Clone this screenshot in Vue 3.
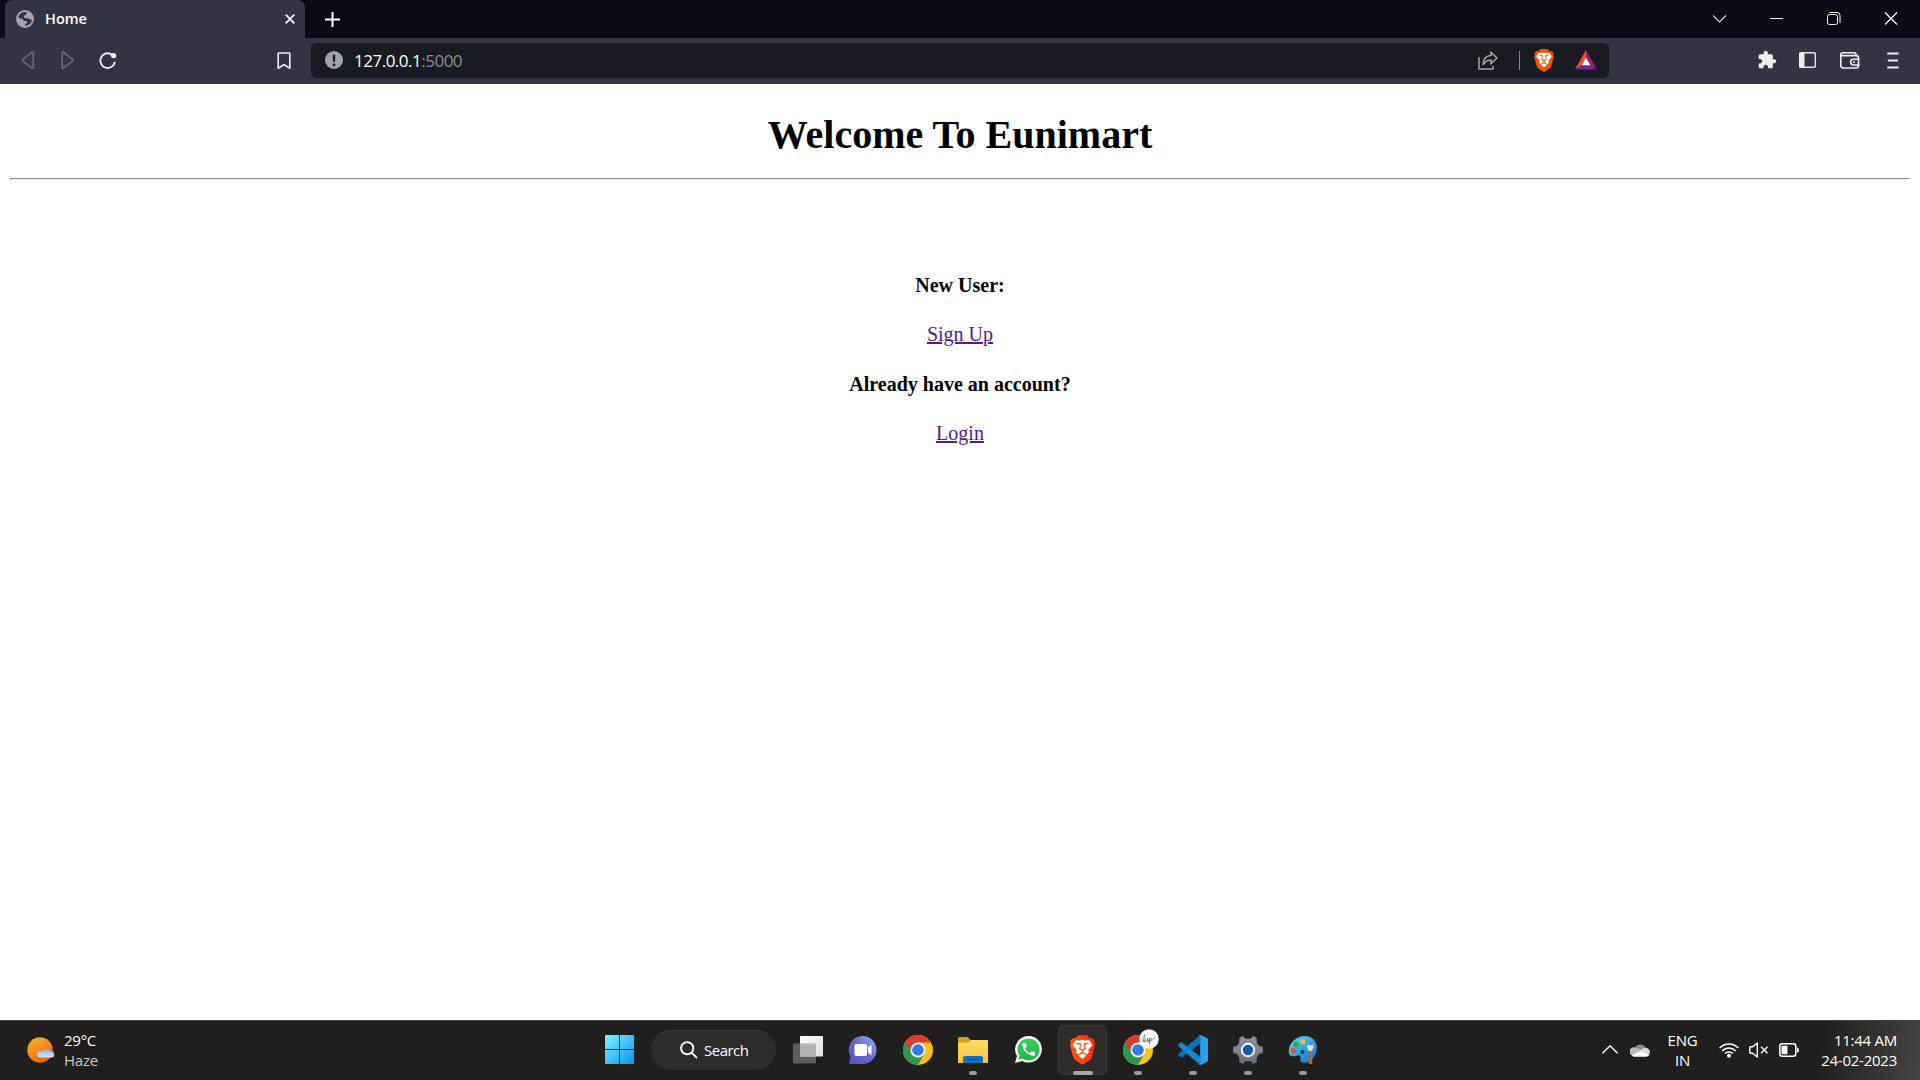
<script setup>
const shield =
  'M15.68 0l2.096 2.38s1.84-.512 2.709.358c.868.87 1.584 1.638 1.584 1.638l-.562 1.381.715 2.047s-2.104 7.98-2.35 8.955c-.486 1.919-.818 2.66-2.198 3.633-1.38.972-3.884 2.66-4.293 2.916-.409.256-.92.692-1.38.692-.46 0-.97-.436-1.38-.692a185.796 185.796 0 01-4.293-2.916c-1.38-.973-1.712-1.714-2.197-3.633-.247-.975-2.351-8.955-2.351-8.955l.715-2.047-.562-1.381s.716-.768 1.585-1.638c.868-.87 2.708-.358 2.708-.358L8.321 0h7.36z'
const lion =
  'M12.001 14.936c-.14 0-1.038.317-1.758.69-.72.373-1.242.637-1.409.742-.167.104-.065.301.087.409.152.107 2.194 1.69 2.393 1.866.198.175.489.464.687.464.198 0 .49-.29.688-.464.198-.175 2.24-1.759 2.392-1.866.152-.108.254-.305.087-.41-.167-.104-.689-.368-1.41-.741-.72-.373-1.617-.69-1.757-.69zm0-11.278s-.409.001-1.022.206-1.278.46-1.584.46c-.307 0-2.581-.434-2.581-.434S4.119 7.152 4.119 7.849c0 .697.339.881.68 1.243l2.02 2.149c.192.203.59.511.356 1.066-.235.555-.58 1.26-.196 1.977.384.716 1.042 1.194 1.464 1.115.421-.08 1.412-.598 1.776-.834.364-.237 1.518-1.19 1.518-1.554 0-.365-1.193-1.02-1.413-1.168-.22-.15-1.226-.725-1.247-.95-.02-.227-.012-.293.284-.851.297-.559.831-1.304.742-1.8-.089-.495-.95-.753-1.565-.986-.615-.232-1.799-.671-1.947-.74-.148-.068-.11-.133.339-.175.448-.043 1.719-.212 2.292-.052.573.16 1.552.403 1.632.532.079.13.149.134.067.579-.081.445-.5 2.581-.541 2.96-.04.38-.12.63.288.724.409.094 1.097.256 1.333.256s.924-.162 1.333-.256c.408-.093.329-.344.288-.723-.04-.38-.46-2.516-.541-2.961-.082-.445-.012-.45.067-.579.08-.129 1.059-.372 1.632-.532.573-.16 1.845.009 2.292.052.449.042.487.107.339.175-.148.069-1.332.508-1.947.74-.615.233-1.476.49-1.565.986-.09.496.445 1.241.742 1.8.297.558.304.624.284.85-.02.226-1.026.802-1.247.951-.22.15-1.413.803-1.413 1.168 0 .364 1.154 1.317 1.518 1.554.364.236 1.355.755 1.776.834.422.079 1.08-.4 1.464-1.115.384-.716.039-1.422-.195-1.977-.235-.555.163-.863.355-1.066l2.02-2.149c.341-.362.68-.546.68-1.243 0-.697-2.695-3.96-2.695-3.96s-2.274.436-2.58.436c-.307 0-.972-.256-1.585-.461-.613-.205-1.022-.206-1.022-.206z'

const apps = [
  { name: 'taskview' },
  { name: 'chat' },
  { name: 'chrome' },
  { name: 'files', running: true },
  { name: 'whatsapp' },
  { name: 'brave', running: true, active: true },
  { name: 'chrome', running: true, profile: true },
  { name: 'code', running: true },
  { name: 'settings', running: true },
  { name: 'paint', running: true },
]
</script>

<template>
  <div class="screen">
    <header class="tabs">
      <div class="tab">
        <svg class="globe" width="18" height="18" viewBox="0 0 18 18">
          <circle cx="9" cy="9" r="9" fill="#a3a6b0" />
          <path d="M9 2C6 2 3 4 2.200 7.600L5 8.700c2 .2 2.800 1 2.600 2.300h2.700c.8 0 1 .6.800 1.400-.2 1-.9 1.300-1.900 1.300v2.200c3.800-.2 6.500-2.700 6.800-6.300-1.800.2-2.700-.3-3.200-1.300H9.600C8.300 8.200 7.700 7.200 8 6.300c.2-.8.900-1.100 2-1.200.1-1.200.4-2 1.300-2.800C10.600 2 9.800 2 9 2z" fill="#323443" />
        </svg>
        <span class="tab-title">Home</span>
        <svg class="tab-close" width="10" height="10" viewBox="0 0 10 10"><path d="M.7.7l8.600 8.600M9.300.7L.7 9.300" stroke="#fff" stroke-width="1.700" /></svg>
      </div>
      <svg class="plus" width="15" height="15" viewBox="0 0 15 15"><path d="M7.500 0v15M0 7.500h15" stroke="#fff" stroke-width="2" /></svg>
      <div class="window-buttons">
        <svg width="57" height="38"><path d="M22 15.500l6.500 6.500 6.500-6.500" fill="none" stroke="#d8d8dc" stroke-width="1.100" /></svg>
        <svg width="57" height="38"><path d="M22 18.500h13" stroke="#fff" /></svg>
        <svg width="57" height="38" fill="none" stroke="#fff"><rect x="22.500" y="14.500" width="10" height="10" rx="2" /><path d="M24.500 12.500h7.500a3 3 0 0 1 3 3v7.500" /></svg>
        <svg width="58" height="38"><path d="M23 12.500l12 12M35 12.500l-12 12" stroke="#fff" stroke-width="1.200" /></svg>
      </div>
    </header>

    <div class="toolbar">
      <div class="nav">
        <svg width="40" height="46"><path d="M27.300 15v14.500q0 1-1 .5L17 23.300q-1.200-1 0-2L26.300 14q1-.3 1 1z" transform="translate(-6 0)" fill="none" stroke="#6b6d78" stroke-width="1.500" /></svg>
        <svg width="40" height="46"><path d="M16.700 15v14.500q0 1 1 .5L27 23.300q1.200-1 0-2L17.700 14q-1-.3-1 1z" transform="translate(-6.500 0)" fill="none" stroke="#6b6d78" stroke-width="1.500" /></svg>
        <svg width="40" height="46"><path d="M18.500 15.900A7.300 7.300 0 1 0 22.700 24.500" fill="none" stroke="#eee" stroke-width="1.900" stroke-linecap="round" /><path d="M18 15.500Q19.500 14.800 21.500 15q2.800.3 2.800 2.800t-2.600 2.500q-1.700 0-2.500-1.500z" fill="#eee" /></svg>
        <svg class="bookmark" width="14" height="18" viewBox="0 0 14 18"><path d="M1.800 1h10.400q.6 0 .6.600v14.700L7.700 13q-.7-.4-1.400 0l-5.100 3.300V1.600q0-.6.600-.6z" fill="none" stroke="#eee" stroke-width="1.600" stroke-linejoin="round" /></svg>
      </div>
      <div class="address">
        <svg width="18" height="18" viewBox="0 0 18 18"><circle cx="9" cy="9" r="9" fill="#a0a3ad" /><path d="M9 3.500v7.300" stroke="#191b22" stroke-width="2.400" /><circle cx="9" cy="14" r="1.400" fill="#191b22" /></svg>
        <span class="url">127.0.0.1<span class="port">:5000</span></span>
        <div class="address-icons">
          <svg class="share" width="20" height="19" viewBox="0 0 20 19" fill="none" stroke="#a5a6aa" stroke-width="1.500"><path d="M1 6v12h14v-3" /><path d="M5 14q.5-9.500 8-9.500V1.300L19 7l-6 5.500V9.200Q8 8.700 5 14z" /></svg>
          <span class="divider"></span>
          <svg class="shield" width="20" height="23" viewBox="1.600 0 20.800 24" preserveAspectRatio="none"><path :d="shield" fill="#fb5008" /><path :d="lion" fill="#fff" /></svg>
          <svg class="bat" width="22" height="20" viewBox="0 0 22 20"><path d="M11 0L0 19.500 7.500 15 11 8z" fill="#fc4a27" /><path d="M11 0l11 19.500L14.800 15 11 8z" fill="#9e1f63" /><path d="M0 19.500h22L15.500 15h-9z" fill="#662d91" /><path d="M11 7.500L6.700 15.200h8.600z" fill="#fff" /></svg>
        </div>
      </div>
      <div class="tools">
        <svg width="20" height="20" viewBox="0 0 24 24"><path fill="#eee" d="M20.500 11H19V7c0-1.100-.9-2-2-2h-4V3.500C13 2.120 11.880 1 10.500 1S8 2.120 8 3.500V5H4c-1.100 0-1.990.9-1.990 2v3.800H3.500c1.490 0 2.700 1.210 2.700 2.700s-1.210 2.700-2.700 2.700H2V20c0 1.100.9 2 2 2h3.800v-1.500c0-1.490 1.210-2.700 2.700-2.700 1.490 0 2.700 1.210 2.700 2.700V22H17c1.100 0 2-.9 2-2v-4h1.500c1.380 0 2.500-1.120 2.500-2.500S21.880 11 20.500 11z" /></svg>
        <svg class="panel" width="17" height="16" viewBox="0 0 17 16"><rect x=".7" y=".7" width="15.600" height="14.600" rx="1" fill="none" stroke="#e4e4e8" stroke-width="1.400" /><path d="M0 1h5.500v14H0z" fill="#eee" /></svg>
        <svg class="wallet" width="20" height="17" viewBox="0 0 20 17" fill="none" stroke="#eee" stroke-width="1.600"><path d="M16 3.500V2.200Q16 .8 14.500.8h-12Q.8.800.8 2.500v11q0 2.500 2.500 2.500H16q2.500 0 2.500-2.500V6Q18.500 3.600 16 3.600H3Q1 3.600.8 2.300" /><path d="M19.500 7.200h-6a2.900 2.900 0 0 0 0 5.800h6M13 10h2" /></svg>
        <svg class="menu" width="12" height="17" viewBox="0 0 12 17"><path d="M.3 1.500h11.200M.8 8.500h10.200M.3 15.500h11.200" stroke="#eee" stroke-width="1.800" /></svg>
      </div>
    </div>

    <main class="page">
      <h1>Welcome To Eunimart</h1>
      <hr />
      <div class="choices">
        <b class="new-user">New User:</b>
        <a class="signup">Sign Up</a>
        <b class="have-account">Already have an account?</b>
        <a class="login">Login</a>
      </div>
    </main>

    <footer class="taskbar">
      <svg width="0" height="0" class="defs">
        <defs>
          <linearGradient id="sun" x1="0" y1="0" x2=".6" y2="1"><stop offset="0" stop-color="#f5b92e" /><stop offset="1" stop-color="#f2650f" /></linearGradient>
          <linearGradient id="cloud" x1="0" y1="0" x2="0" y2="1"><stop offset="0" stop-color="#86aef0" /><stop offset="1" stop-color="#d5e4fb" /></linearGradient>
          <linearGradient id="win" gradientUnits="userSpaceOnUse" x1="0" y1="0" x2="29" y2="29"><stop offset="0" stop-color="#7cf3ff" /><stop offset="1" stop-color="#0a92fb" /></linearGradient>
          <linearGradient id="chat" x1="0" y1="1" x2="1" y2="0"><stop offset="0" stop-color="#5450c4" /><stop offset=".5" stop-color="#6b68cd" /><stop offset="1" stop-color="#86b6f6" /></linearGradient>
          <linearGradient id="folder" x1="0" y1="0" x2="0" y2="1"><stop offset="0" stop-color="#ffdc6b" /><stop offset="1" stop-color="#fcc32e" /></linearGradient>
          <linearGradient id="brave" x1="0" y1="0" x2="1" y2="0"><stop offset="0" stop-color="#ff5a10" /><stop offset="1" stop-color="#ff2b00" /></linearGradient>
          <linearGradient id="palette" x1="0" y1="0" x2=".8" y2="1"><stop offset="0" stop-color="#59dcf5" /><stop offset="1" stop-color="#1573d2" /></linearGradient>
          <linearGradient id="gear" gradientUnits="userSpaceOnUse" x1="0" y1="0" x2="0" y2="30"><stop offset="0" stop-color="#8d969e" /><stop offset="1" stop-color="#66707a" /></linearGradient>
          <linearGradient id="sheet" x1="0" y1="0" x2="1" y2="1"><stop offset="0" stop-color="#fff" /><stop offset="1" stop-color="#ddd" /></linearGradient>
          <linearGradient id="green" x1="0" y1="0" x2="0" y2="1"><stop offset="0" stop-color="#35d160" /><stop offset="1" stop-color="#20b845" /></linearGradient>
        </defs>
      </svg>

      <div class="weather">
        <svg width="28" height="26" viewBox="0 0 28 26"><circle cx="13" cy="13" r="12.700" fill="url(#sun)" /><path d="M13.500 20.500a3.100 3.100 0 0 1-.3-6.200q.8-.2 1.800 0a4.500 4.500 0 0 1 8.300.2 3 3 0 1 1 1.700 6z" fill="url(#cloud)" /></svg>
        <div class="weather-text"><span class="temp">29°C</span><span class="haze">Haze</span></div>
      </div>

      <div class="dock">
        <div class="start"><svg width="29" height="29" viewBox="0 0 29 29" fill="url(#win)"><path d="M1 0h13v14H0V1q0-1 1-1zM15 0h13q1 0 1 1v13H15zM0 15h14v14H1q-1 0-1-1zM15 15h14v13q0 1-1 1H15z" /></svg></div>
        <div class="search">
          <svg width="18" height="18" viewBox="0 0 18 18" fill="none" stroke="#fff" stroke-width="1.900"><circle cx="7.200" cy="7.200" r="6.100" /><path d="M11.600 11.600l5.400 5.400" /></svg>
          <span>Search</span>
        </div>
        <div v-for="(app, i) in apps" :key="i" class="app" :class="{ active: app.active }">
          <svg v-if="app.name === 'taskview'" width="30" height="30" viewBox="0 0 30 30"><rect y="8.500" width="23" height="20" rx="1" fill="#5d5d5d" /><rect x="7" y="1" width="23" height="20.500" rx="1" fill="url(#sheet)" /><path d="M7 8.500h16v13H8q-1 0-1-1z" fill="#b3b3b3" /></svg>
          <svg v-else-if="app.name === 'chat'" width="30" height="30" viewBox="0 0 30 30"><path d="M15 1a14 14 0 1 1-1 28H2q-1.200 0-.8-1.200L2.600 22A14 14 0 0 1 15 1z" fill="url(#chat)" /><rect x="6.500" y="9" width="12.500" height="12" rx="1.800" fill="#fff" /><path d="M20 12.500l3.500-3v11l-3.500-3z" fill="#fff" /></svg>
          <svg v-else-if="app.name === 'chrome'" width="30" height="30" viewBox="0 0 48 48"><circle cx="24" cy="24" r="24" fill="#fbc116" /><path d="M24 24L3.200 12A24 24 0 0 0 24 48l10.400-18z" fill="#2b9a48" /><path d="M3.200 12A24 24 0 0 1 44.800 12H24L13.600 30z" fill="#e33b2e" /><path d="M3.200 12L13.600 30 20 34 10 34z" fill="#2b9a48" /><circle cx="24" cy="24" r="12" fill="#fff" /><circle cx="24" cy="24" r="9.300" fill="#3379ed" /></svg>
          <svg v-else-if="app.name === 'files'" width="30" height="30" viewBox="0 0 30 30"><path d="M0 3.500q0-1.500 1.500-1.500h7.200q1 0 1.600.7L12.500 5H30v8H0z" fill="#dfa00c" /><path d="M0 7.500h9.500q1 0 1.700-.7L13 5h15.500Q30 5 30 6.500V28H0z" fill="url(#folder)" /><path d="M5 28v-5q0-2 2-2h16q2 0 2 2v5z" fill="#0f73c5" /><path d="M9 24.500h12" stroke="#0a4c8c" stroke-width="1.200" /></svg>
          <svg v-else-if="app.name === 'whatsapp'" width="30" height="30" viewBox="0 0 30 30"><path d="M15.500 1a13.300 13.300 0 1 1-6.300 25L2 28l2-7A13.300 13.300 0 0 1 15.500 1z" fill="#fff" /><path d="M15.500 3.400a11 11 0 1 1-5.900 20.200l-4.200 1.100 1.200-4A11 11 0 0 1 15.500 3.400z" fill="url(#green)" /><path transform="translate(7.300 6) scale(.7)" fill="#fff" d="M6.620 10.790c1.440 2.830 3.760 5.140 6.590 6.590l2.200-2.200c.27-.27.67-.36 1.020-.24 1.120.37 2.330.57 3.570.57.55 0 1 .45 1 1V20c0 .55-.45 1-1 1-9.390 0-17-7.610-17-17 0-.55.45-1 1-1h3.500c.55 0 1 .45 1 1 0 1.250.2 2.450.57 3.570.11.350.03.740-.25 1.020l-2.200 2.200z" /></svg>
          <svg v-else-if="app.name === 'brave'" width="25" height="30" viewBox="1.800 0 20.400 24"><path :d="shield" fill="url(#brave)" /><path :d="lion" fill="#fff" /></svg>
          <svg v-else-if="app.name === 'code'" width="30" height="30" viewBox="0 0 30 30"><path d="M22 0v8.500L4.200 22.300q-.8.600-1.500 0L.6 20.400q-.8-.8 0-1.600z" fill="#0c6fb8" /><path d="M22 30v-8.500L4.200 7.700q-.8-.6-1.500 0L.6 9.600q-.8.800 0 1.600z" fill="#1587d2" /><path d="M20.500.8Q21.500-.3 23 .2l6 2.900q1 .6 1 1.700v20.400q0 1.100-1 1.700l-6 2.900q-1.500.5-2.500-.6 1.700.5 1.700-1.400V2.200Q22.200.3 20.500.8z" fill="#2ba0f0" /></svg>
          <svg v-else-if="app.name === 'settings'" width="30" height="30" viewBox="0 0 30 30"><path d="M6.500 3.500Q8 2 10 1.200q1 2.900 3.200 2.900h3.600q2.200 0 3.200-2.900 2 .8 3.500 2.300-.8 3 .4 4.700l1.200 2.100q1.200 1.700 4.400 1.600.5 2.600.1 5.900-3.300.2-4.500 2l-1.200 2.100q-1.100 1.800-.4 4.600-1.500 1.600-3.500 2.300-1-2.900-3.200-2.900h-3.600q-2.200 0-3.200 2.900-2-.7-3.500-2.300.7-2.800-.4-4.600l-1.200-2.100Q3.700 18 .4 17.800q-.4-3.300.1-5.900 3.200.1 4.400-1.600l1.200-2.100q1.200-1.700.4-4.700z" fill="url(#gear)" stroke="url(#gear)" stroke-width=".6" stroke-linejoin="round" /><circle cx="15" cy="15" r="7.200" fill="#f4f4f4" /><circle cx="15" cy="15" r="5.200" fill="#0c5cab" /></svg>
          <svg v-else width="30" height="30" viewBox="0 0 30 30"><path d="M17 1c7 0 12 5 11.800 12-.2 8-6 15-12.500 15-4 0-4.300-3-3.800-5.300.4-2-1-3-3-2.300-3.500 1.400-7.500 1.300-8.500-2C-.5 11 6 1 17 1z" fill="url(#palette)" /><circle cx="15" cy="6.500" r="2.600" fill="#fcb827" /><circle cx="8" cy="9.500" r="2.700" fill="#2fa52f" /><circle cx="5.200" cy="15.500" r="2.600" fill="#d9532c" /><circle cx="14.500" cy="17" r="2" fill="#123450" /><path d="M21 15h2.800l.5 13.500q-1.900 1.500-3.800 0z" fill="#b5651d" /><path d="M19 10h6.500v2.500l-1.700 3.500h-3l-1.800-3.500z" fill="#f2dcb8" /></svg>
          <svg v-if="app.profile" class="profile" width="20" height="20" viewBox="0 0 20 20"><circle cx="10" cy="10" r="9.800" fill="#f4f4f4" /><path d="M5.500 5.500l-1 7q1.800-3.500 3-1-.6 2-3 1M8.500 9v3.500q1.500.3 2-3v5.500m0-5q2-1.500 2 .5t-2 1.500M13.500 10.500q1.500-2 2.500-1" fill="none" stroke="#777" stroke-width="1" /></svg>
          <i v-if="app.running" class="mark"></i>
        </div>
      </div>

      <div class="tray">
        <svg width="16" height="9" viewBox="0 0 16 9"><path d="M.5 8.300L8 .8l7.500 7.500" fill="none" stroke="#fff" stroke-width="1.400" /></svg>
        <svg class="onedrive" width="20" height="14" viewBox="0 0 20 14"><path d="M5 5.200a5.700 5.700 0 0 1 10.500-.5L10 9z" fill="#8c8c8c" /><path d="M2 12.500A4.300 4.300 0 0 1 5.500 4.600q1.500 0 3 1L14 8.500 4 13.500z" fill="#b9b9b9" /><path d="M9 8l4-2.600q1.200-.7 3-.6a4.300 4.300 0 0 1 3.500 6z" fill="#dcdcdc" /><path d="M2 12.200L10.500 8l9.200 3q-.8 2.700-3.700 2.700H4.500q-1.600 0-2.500-1.500z" fill="#fff" /></svg>
        <div class="lang"><span>ENG</span><span>IN</span></div>
        <svg class="wifi" width="20" height="16" viewBox="0 0 20 16" fill="none" stroke="#fff" stroke-width="1.500"><path d="M.6 6a13 13 0 0 1 18.800 0M3.300 8.900a9.300 9.300 0 0 1 13.400 0M6 11.600a5.600 5.600 0 0 1 8 0" /><circle cx="10" cy="13.700" r="1.200" fill="#fff" /></svg>
        <svg class="volume" width="20" height="16" viewBox="0 0 20 16" fill="none" stroke="#fff" stroke-width="1.400"><path d="M.8 5.500q0-.7.700-.7h2.200L8.300 1v14l-4.600-3.800H1.500q-.7 0-.7-.7z" stroke-linejoin="round" /><path d="M12 4.800l6.500 6.500M18.500 4.800L12 11.300" /></svg>
        <svg class="battery" width="20" height="14" viewBox="0 0 20 14"><rect x=".8" y=".8" width="16" height="12.400" rx="2.500" fill="none" stroke="#fff" stroke-width="1.500" /><rect x="2.500" y="2.800" width="6" height="8.400" rx="1" fill="#fff" /><path d="M18 4.500q2 0 2 2.500t-2 2.500z" fill="#fff" /></svg>
        <div class="clock"><span class="time">11:44 AM</span><span class="date">24-02-2023</span></div>
      </div>
    </footer>
  </div>
</template>

<style>
body {
  margin: 0;
  overflow: hidden;
}
</style>

<style scoped>
.screen {
  width: 1920px;
  height: 1080px;
  display: flex;
  flex-direction: column;
  background: #fff;
  font-family: "Open Sans", "Noto Sans", sans-serif;
  color: #fff;
}
svg {
  display: block;
  flex: none;
}
.tabs {
  height: 38px;
  display: flex;
  align-items: center;
  background: #0b0b15;
}
.tab {
  width: 300px;
  height: 38px;
  margin-left: 5px;
  box-sizing: border-box;
  padding: 0 10px 0 11px;
  display: flex;
  align-items: center;
  background: #323443;
  border-radius: 7px 7px 0 0;
}
.tab-title {
  margin-left: 11px;
  font-size: 14.5px;
  font-weight: 600;
  line-height: 20px;
}
.tab-close {
  margin-left: auto;
}
.plus {
  margin-left: 20px;
}
.window-buttons {
  margin-left: auto;
  display: flex;
}
.toolbar {
  height: 46px;
  display: flex;
  align-items: center;
  background: #323443;
}
.nav {
  width: 311px;
  box-sizing: border-box;
  padding: 0 20px 0 12px;
  display: flex;
  align-items: center;
}
.bookmark {
  margin-left: auto;
}
.address {
  width: 1298px;
  height: 35px;
  margin-top: -2px;
  box-sizing: border-box;
  padding: 0 12px 0 14px;
  display: flex;
  align-items: center;
  border-radius: 5px;
  background: #181b22;
}
.url {
  margin-left: 11px;
  padding-top: 1px;
  font-size: 17px;
  line-height: 24px;
  letter-spacing: -0.5px;
}
.port {
  color: #8b8c91;
}
.address-icons {
  margin-left: auto;
  display: flex;
  align-items: center;
}
.divider {
  width: 1px;
  height: 19px;
  margin: 0 14px 0 21px;
  background: #85878d;
}
.bat {
  margin-left: 21px;
}
.tools {
  margin: -2px 0 0 auto;
  padding-right: 21px;
  display: flex;
  align-items: center;
}
.panel {
  margin-left: 22px;
}
.wallet {
  margin-left: 24px;
}
.menu {
  margin-left: 27px;
}
.page {
  height: 936px;
  box-sizing: border-box;
  padding: 0 10px;
  font-family: "Liberation Serif", serif;
  color: #000;
  text-align: center;
}
h1 {
  margin: 28px 0 20px;
  font-size: 40px;
  line-height: 46px;
}
hr {
  margin: 0;
  height: 2px;
  box-sizing: border-box;
  border: 1px solid;
  border-color: #8f8f8f #eee #eee #8f8f8f;
}
.choices {
  margin-top: 94px;
  display: flex;
  flex-direction: column;
  align-items: center;
  gap: 26px;
  font-size: 20px;
  line-height: 23px;
}
.have-account {
  margin-top: 1px;
}
.choices a {
  color: #551a8b;
  text-decoration: underline;
}
.taskbar {
  height: 60px;
  box-sizing: border-box;
  padding-bottom: 2px;
  border-top: 1px solid #3f4241;
  display: flex;
  align-items: center;
  position: relative;
  background: linear-gradient(100deg, #201f1e 0, #201f1e 94.5%, #454442 100%);
  font-size: 15px;
  letter-spacing: -0.25px;
  line-height: 20px;
}
.defs {
  position: absolute;
}
.weather {
  width: 592px;
  box-sizing: border-box;
  padding-left: 27px;
  display: flex;
  align-items: center;
}
.weather-text,
.lang,
.clock {
  display: flex;
  flex-direction: column;
}
.weather-text {
  margin-left: 9px;
}
.haze {
  color: #c9c9c9;
}
.dock {
  display: flex;
  align-items: center;
}
.start {
  width: 55px;
  display: flex;
  justify-content: center;
}
.search {
  width: 125px;
  height: 40px;
  margin: 0 4px;
  box-sizing: border-box;
  padding-left: 29px;
  display: flex;
  align-items: center;
  border-radius: 20px;
  border-top: 1px solid #3a3938;
  background: #2d2c2b;
}
.search span {
  margin-left: 6px;
  letter-spacing: -0.5px;
}
.app {
  width: 49px;
  height: 50px;
  margin: 0 3px;
  display: flex;
  align-items: center;
  justify-content: center;
  position: relative;
  border-radius: 5px;
}
.active {
  background: #2d2c2b;
  box-shadow: inset 0 0 0 1px #393837;
}
.mark {
  position: absolute;
  bottom: 0;
  width: 8px;
  height: 4px;
  border-radius: 2px;
  background: #999;
}
.active .mark {
  width: 20px;
  background: #aaa7a4;
}
.profile {
  position: absolute;
  right: 3px;
  top: 4px;
}
.tray {
  margin-left: auto;
  padding-right: 23px;
  display: flex;
  align-items: center;
}
.onedrive {
  margin-left: 12px;
}
.lang {
  width: 40px;
  margin-left: 13px;
  align-items: center;
}
.wifi {
  margin-left: 16px;
}
.volume,
.battery {
  margin-left: 10px;
}
.clock {
  width: 98.5px;
  align-items: flex-end;
}
</style>
